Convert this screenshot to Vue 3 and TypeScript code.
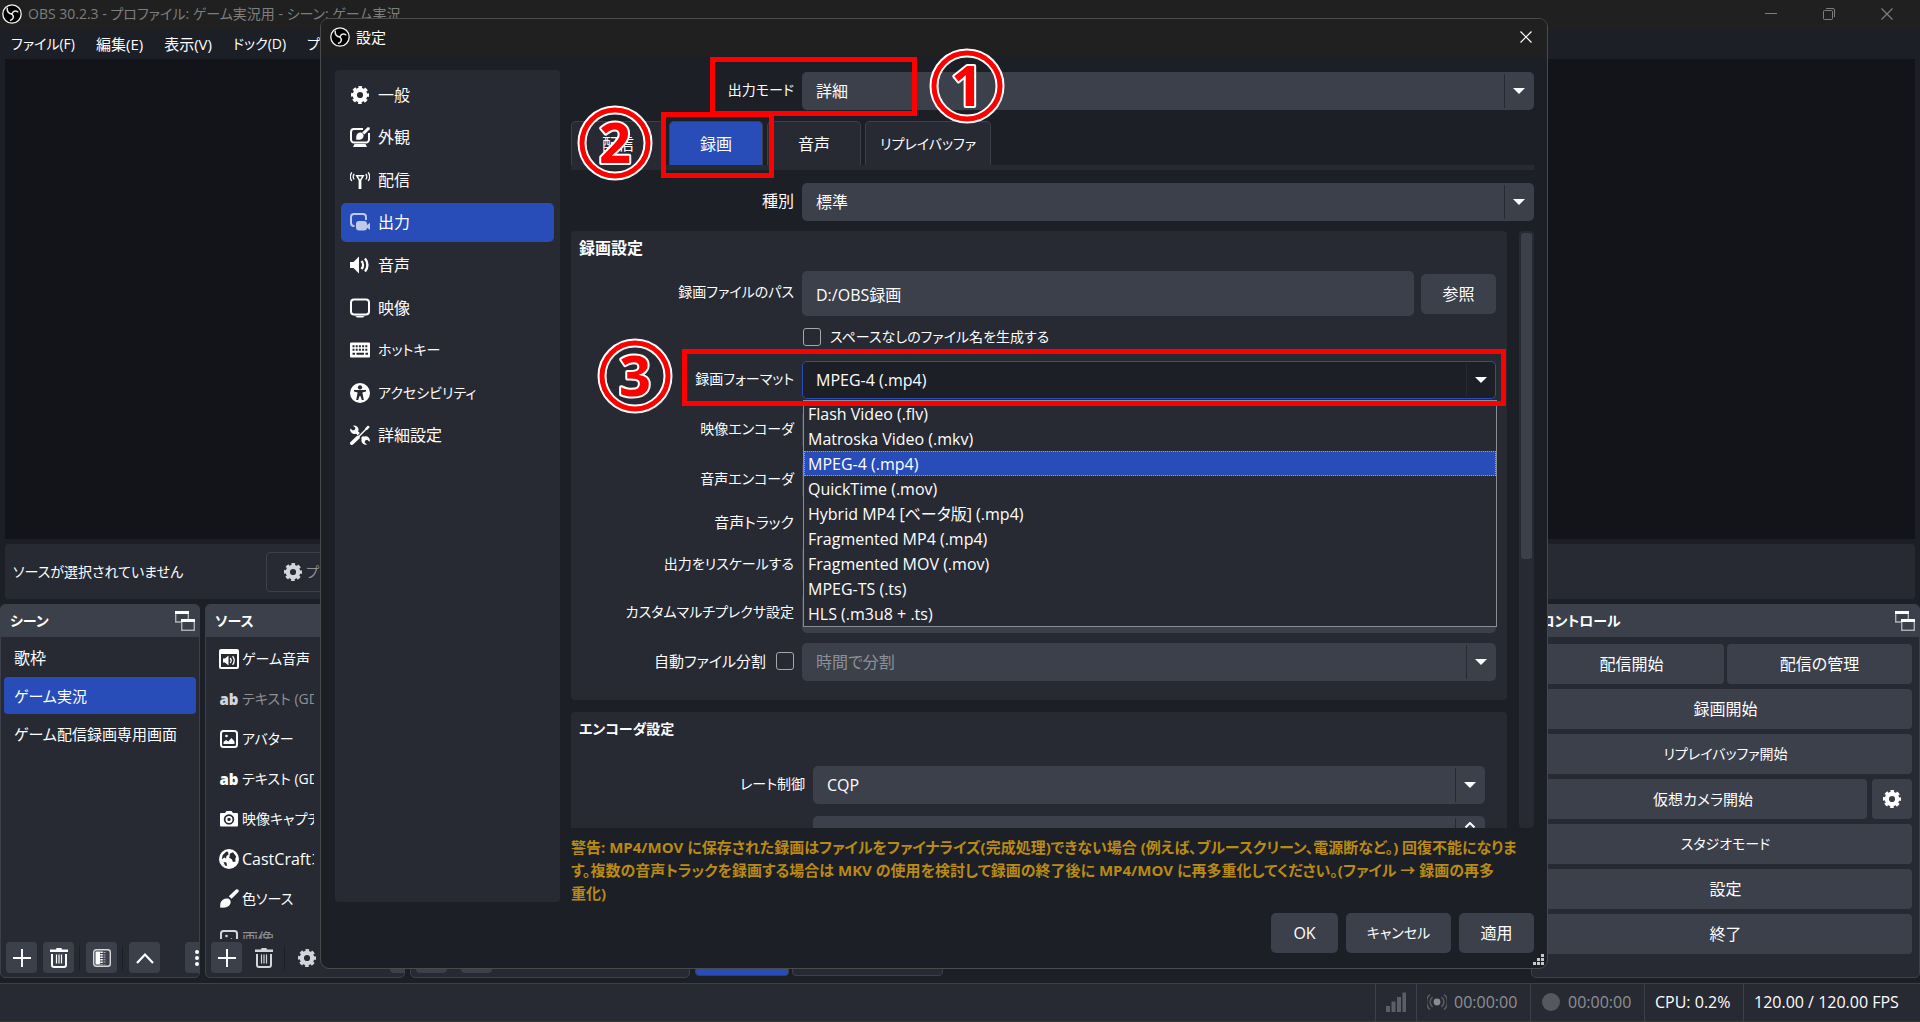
<script setup lang="ts">
import { ref } from 'vue'

interface NavItem { icon: string; label: string }
interface SourceItem { icon: string; label: string; muted?: boolean }

const menus: string[] = ['ファイル(F)', '編集(E)', '表示(V)', 'ドック(D)', 'プロファイル(P)']

const navItems: NavItem[] = [
  { icon: 'gear', label: '一般' },
  { icon: 'appearance', label: '外観' },
  { icon: 'antenna', label: '配信' },
  { icon: 'output', label: '出力' },
  { icon: 'speaker', label: '音声' },
  { icon: 'display', label: '映像' },
  { icon: 'keyboard', label: 'ホットキー' },
  { icon: 'access', label: 'アクセシビリティ' },
  { icon: 'tools', label: '詳細設定' },
]
const activeNav = ref('出力')

const tabs: string[] = ['配信', '録画', '音声', 'リプレイバッファ']
const activeTab = ref('録画')

const formats: string[] = [
  'Flash Video (.flv)',
  'Matroska Video (.mkv)',
  'MPEG-4 (.mp4)',
  'QuickTime (.mov)',
  'Hybrid MP4 [ベータ版] (.mp4)',
  'Fragmented MP4 (.mp4)',
  'Fragmented MOV (.mov)',
  'MPEG-TS (.ts)',
  'HLS (.m3u8 + .ts)',
]
const format = ref('MPEG-4 (.mp4)')

const scenes: string[] = ['歌枠', 'ゲーム実況', 'ゲーム配信録画専用画面']
const activeScene = ref('ゲーム実況')

const sources: SourceItem[] = [
  { icon: 'audio-source', label: 'ゲーム音声' },
  { icon: 'text', label: 'テキスト (GDI+)', muted: true },
  { icon: 'image', label: 'アバター' },
  { icon: 'text', label: 'テキスト (GDI+)' },
  { icon: 'camera', label: '映像キャプチャ' },
  { icon: 'globe', label: 'CastCraftコメント' },
  { icon: 'brush', label: '色ソース' },
  { icon: 'image', label: '画像', muted: true },
]

function sizeOf(label: string): string {
  const kana = (label.match(/[\u3040-\u30ff]/g) ?? []).length
  const kanji = (label.match(/[\u4e00-\u9fff]/g) ?? []).length
  if (kana > kanji) return 'sm'
  return kana > 0 ? 'md' : ''
}
</script>

<template>
  <svg class="defs" aria-hidden="true">
    <symbol id="gear" viewBox="0 0 20 20">
      <circle cx="10" cy="10" r="5.2" fill="none" stroke="currentColor" stroke-width="4.2" />
      <circle cx="10" cy="10" r="7.6" fill="none" stroke="currentColor" stroke-width="2.8" stroke-dasharray="3.5 2.47" stroke-dashoffset="1.75" />
    </symbol>
    <symbol id="logo" viewBox="0 0 20 20">
      <circle cx="10" cy="10" r="9.2" fill="#000" stroke="#f4f4f4" stroke-width="1.3" />
      <g fill="none" stroke="#e6e6e6" stroke-width="1.5" stroke-linecap="round">
        <path d="M5.2 4.2C5 7.400 6.800 9.600 10 10" />
        <path d="M15.800 7.800C13.200 6.400 10.800 7.200 10 10" />
        <path d="M8.600 16.200C11.600 15.400 12.200 12.400 10 10" />
      </g>
    </symbol>
    <symbol id="appearance" viewBox="0 0 20 20">
      <path d="M13 2H4a3 3 0 0 0-3 3v7.500a3 3 0 0 0 3 3h12a3 3 0 0 0 3-3V6" fill="none" stroke="currentColor" stroke-width="2" />
      <path d="M4.500 17h11l1.500 3h-14z" fill="currentColor" />
      <path d="M17.600 0.200l2.200 0.400-0.200 1.600-5.200 5.400-2.200-2z" fill="currentColor" />
      <path d="M11 5.600c2.200 0.600 3.200 2.600 2.200 4.800-1 2-3.400 2.600-7.400 2.200 0.800-0.800 0.200-2.200 0.600-3.800 0.500-2.200 2.400-3.800 4.600-3.200z" fill="currentColor" />
    </symbol>
    <symbol id="antenna" viewBox="0 0 20 20">
      <path d="M5.400 5h9.200l-3.200 5.200V19H8.600v-8.800zM8 6.600l2 3 2-3z" fill="currentColor" fill-rule="evenodd" />
      <path d="M4.200 9.400a4.500 4.500 0 0 1 0-5.400M1.800 11a7.500 7.500 0 0 1 0-8.600M15.800 9.400a4.500 4.500 0 0 0 0-5.400M18.200 11a7.500 7.500 0 0 0 0-8.600" fill="none" stroke="currentColor" stroke-width="1.300" />
    </symbol>
    <symbol id="output" viewBox="0 0 20 20">
      <path d="M4.500 14H4a3 3 0 0 1-3-3V5a3 3 0 0 1 3-3h9a3 3 0 0 1 3 3v3" fill="none" stroke="currentColor" stroke-width="2" />
      <rect x="6" y="9" width="11" height="9.500" rx="3" fill="currentColor" />
      <path d="M16 13.700l4-3v7.300l-4-3z" fill="currentColor" />
    </symbol>
    <symbol id="speaker" viewBox="0 0 20 20">
      <path d="M0 7h3.500L9 1.500v17L3.500 13H0z" fill="currentColor" />
      <path d="M11.500 6a6 6 0 0 1 0 8M15 3.500a10 10 0 0 1 0 13" fill="none" stroke="currentColor" stroke-width="2.400" />
    </symbol>
    <symbol id="display" viewBox="0 0 20 20">
      <rect x="1" y="1.500" width="18" height="15" rx="3" fill="none" stroke="currentColor" stroke-width="2" />
      <path d="M5 17.800h10l-2 1.800H7z" fill="currentColor" />
    </symbol>
    <symbol id="keyboard" viewBox="0 0 20 20">
      <rect x="0" y="2.500" width="20" height="15" rx="1" fill="currentColor" />
      <path d="M2.500 6.200h15M2.500 9.700h15" fill="none" stroke="#272a33" stroke-width="2" stroke-dasharray="2 1.200" />
      <path d="M2.500 13.700h2.500M6.500 13.700h7.500M15.500 13.700h2.500" fill="none" stroke="#272a33" stroke-width="2" />
    </symbol>
    <symbol id="access" viewBox="0 0 20 20">
      <circle cx="10" cy="10" r="10" fill="currentColor" />
      <circle cx="10" cy="4.400" r="2.100" fill="#272a33" />
      <path d="M4 7h12v1.600l-3.600 0.800 1.400 7.600h-2l-1.400-4h-0.800l-1.400 4h-2l1.400-7.600L4 8.600z" fill="#272a33" />
    </symbol>
    <symbol id="tools" viewBox="0 0 20 20">
      <path d="M1.800 18.200l6.200-5.800" stroke="currentColor" stroke-width="3.600" stroke-linecap="round" />
      <path d="M8 12.200l9-9" stroke="currentColor" stroke-width="1.400" />
      <path d="M15 3.400l3-3 1.800 1.600-3 3.200z" fill="currentColor" />
      <path d="M5 5.600l3.800 3.600M12 12l3 2.800" stroke="currentColor" stroke-width="3" />
      <path d="M3 0.800a4.200 4.200 0 1 1-2.600 2.600l2.400 2 2-0.600 0.600-2z" fill="currentColor" />
      <path d="M17 19.400a4.200 4.200 0 1 1 2.600-2.600l-2.400-2-2 0.600-0.600 2z" fill="currentColor" />
    </symbol>
    <symbol id="popout" viewBox="0 0 20 20">
      <path d="M6 11H0.700V1h12.600v7" fill="none" stroke="currentColor" stroke-opacity="0.600" stroke-width="1.400" />
      <rect x="6.700" y="9" width="12.600" height="10.300" fill="none" stroke="currentColor" stroke-opacity="0.600" stroke-width="1.400" />
      <path d="M0 0h14v3H0zM6 8h14v3H6z" fill="currentColor" />
    </symbol>
    <symbol id="audio-source" viewBox="0 0 20 20">
      <path d="M2 0h16a2 2 0 0 1 2 2v16a2 2 0 0 1-2 2H2a2 2 0 0 1-2-2V2a2 2 0 0 1 2-2zM2 5v13h16V5z" fill="currentColor" fill-rule="evenodd" />
      <path d="M4 9.500h2l3.500-3v10l-3.500-3H4z" fill="currentColor" />
      <path d="M11.200 9a4 4 0 0 1 0 5M13.600 7.200a7 7 0 0 1 0 8.600" fill="none" stroke="currentColor" stroke-width="1.300" />
    </symbol>
    <symbol id="image" viewBox="0 0 20 20">
      <rect x="2" y="2" width="16" height="16" rx="2.500" fill="none" stroke="currentColor" stroke-width="2" />
      <circle cx="7.500" cy="7" r="1.300" fill="currentColor" />
      <path d="M4.500 15v-2l2.500-2 2.200 1.600L12.500 9l3 3.600V15z" fill="currentColor" />
    </symbol>
    <symbol id="camera" viewBox="0 0 20 20">
      <path d="M2 4h4l1.500-2h5L14 4h4a1 1 0 0 1 1 1v11.500a1 1 0 0 1-1 1H2a1 1 0 0 1-1-1V5a1 1 0 0 1 1-1zM10 5.200a5.200 5.200 0 1 0 0.010 0z" fill="currentColor" fill-rule="evenodd" />
      <circle cx="10" cy="10.400" r="2.600" fill="none" stroke="currentColor" stroke-width="1.800" />
    </symbol>
    <symbol id="globe" viewBox="0 0 20 20">
      <circle cx="10" cy="10" r="10" fill="currentColor" />
      <path d="M7 2.800L3.600 6.200l-0.800 4L5.500 8.500l1.500 1 0.500-2.500 2-1.500-0.500-2.700zM11 4.500l3-1.200 3.200 4.200-1 2.500 0.400 2.500-2.600 0.500-1.200-2.800-2.600-1.500zM4.500 13l3 0.500 0.500 3.500-2-0.500z" fill="#272a33" />
    </symbol>
    <symbol id="brush" viewBox="0 0 20 20">
      <path d="M17 0.600c1.600-1.200 3.600 0.800 2.400 2.400l-6.800 6.800-2.800-2.600z" fill="currentColor" />
      <path d="M8.600 9.600c3.400 0.600 4 4.400 1.600 7-2 2-4.600 2.200-9.200 2 0.600-1.600-0.200-3.600 1-5.800 1.400-2.400 3.800-3.700 6.600-3.200z" fill="currentColor" />
    </symbol>
    <symbol id="plus" viewBox="0 0 20 20">
      <path d="M10 1v18M1 10h18" fill="none" stroke="currentColor" stroke-width="2" />
    </symbol>
    <symbol id="trash" viewBox="0 0 20 20">
      <path d="M1 1.500h6L7.500 0h5l0.500 1.500h6V4H1z" fill="currentColor" />
      <path d="M3 6v11a2 2 0 0 0 2 2h10a2 2 0 0 0 2-2V6" fill="none" stroke="currentColor" stroke-width="2" />
      <path d="M7.500 6.500v9M10 6.500v9M12.500 6.500v9" fill="none" stroke="currentColor" stroke-width="1.200" />
    </symbol>
    <symbol id="filter" viewBox="0 0 20 20">
      <rect x="1.700" y="1.700" width="16.600" height="16.600" rx="2.500" fill="none" stroke="currentColor" stroke-opacity="0.800" stroke-width="1.400" />
      <path d="M3.500 3.500H8v13H3.500z" fill="currentColor" />
      <path d="M9.500 3.500v13" stroke="currentColor" stroke-width="2.400" stroke-dasharray="1.500 1" />
      <path d="M12.500 4v12.500" stroke="currentColor" stroke-opacity="0.600" stroke-width="2" stroke-dasharray="1 1.400" />
    </symbol>
    <symbol id="up" viewBox="0 0 20 20">
      <path d="M2 15l8-8.500 8 8.500" fill="none" stroke="currentColor" stroke-width="2.200" />
    </symbol>
    <symbol id="dots" viewBox="0 0 20 20">
      <circle cx="10" cy="4" r="2" fill="currentColor" />
      <circle cx="10" cy="10" r="2" fill="currentColor" />
      <circle cx="10" cy="16" r="2" fill="currentColor" />
    </symbol>
    <symbol id="close" viewBox="0 0 12 12">
      <path d="M0.500 0.500l11 11M11.500 0.500l-11 11" fill="none" stroke="currentColor" stroke-width="1.200" />
    </symbol>
  </svg>

  <div class="app">
    <header class="titlebar">
      <svg class="logo"><use href="#logo" /></svg>
      <span class="window-title">OBS 30.2.3 - プロファイル: ゲーム実況用 - シーン: ゲーム実況</span>
      <div class="window-buttons">
        <button type="button" aria-label="最小化"><svg viewBox="0 0 12 12"><path d="M0 5.500h12" stroke="currentColor" /></svg></button>
        <button type="button" aria-label="元に戻す"><svg viewBox="0 0 12 12"><path d="M0.500 3.500a1 1 0 0 1 1-1h7a1 1 0 0 1 1 1v7a1 1 0 0 1-1 1h-7a1 1 0 0 1-1-1zM3 0.500h7a1.500 1.500 0 0 1 1.500 1.500v7" fill="none" stroke="currentColor" /></svg></button>
        <button type="button" aria-label="閉じる"><svg><use href="#close" /></svg></button>
      </div>
    </header>

    <nav class="menubar">
      <button v-for="menu in menus" :key="menu" type="button" :class="sizeOf(menu) || 'md'">{{ menu }}</button>
    </nav>

    <div class="preview"></div>

    <div class="context-bar">
      <span class="context-label sm">ソースが選択されていません</span>
      <button type="button" class="properties sm"><svg class="icon"><use href="#gear" /></svg>プロパティ</button>
    </div>

    <div class="docks">
      <section class="dock">
        <h2 class="dock-title sm">シーン<svg class="icon"><use href="#popout" /></svg></h2>
        <ul class="scene-list">
          <li v-for="scene in scenes" :key="scene">
            <button type="button" :class="[scene.includes('ゲーム') ? 'md' : '', { active: scene === activeScene }]" @click="activeScene = scene">{{ scene }}</button>
          </li>
        </ul>
        <div class="dock-tools">
          <button type="button" aria-label="追加"><svg class="icon"><use href="#plus" /></svg></button>
          <button type="button" aria-label="削除"><svg class="icon"><use href="#trash" /></svg></button>
          <i></i>
          <button type="button" aria-label="フィルタ"><svg class="icon"><use href="#filter" /></svg></button>
          <i></i>
          <button type="button" aria-label="上へ"><svg class="icon"><use href="#up" /></svg></button>
          <button type="button" class="more" aria-label="その他"><svg class="icon"><use href="#dots" /></svg></button>
        </div>
      </section>

      <section class="dock">
        <h2 class="dock-title sm">ソース</h2>
        <ul class="source-list">
          <li v-for="(source, i) in sources" :key="i" :class="{ muted: source.muted }">
            <span v-if="source.icon === 'text'" class="text-glyph">ab</span>
            <svg v-else class="icon"><use :href="'#' + source.icon" /></svg>
            <span :class="['source-name', source.icon === 'globe' ? '' : sizeOf(source.label)]">{{ source.label }}</span>
          </li>
        </ul>
        <div class="dock-tools">
          <button type="button" aria-label="追加"><svg class="icon"><use href="#plus" /></svg></button>
          <button type="button" class="flat" aria-label="削除"><svg class="icon"><use href="#trash" /></svg></button>
          <i></i>
          <button type="button" class="flat" aria-label="プロパティ"><svg class="icon"><use href="#gear" /></svg></button>
          <button type="button" class="more" aria-label="その他"></button>
        </div>
      </section>

      <section class="dock">
        <div class="source-list"></div>
        <div class="dock-tools mixer-tools">
          <button type="button" aria-label="ミキサー設定"></button>
          <button type="button" aria-label="ミキサーメニュー"></button>
        </div>
      </section>

      <div class="dock-tabs"><span class="dock-tab active"></span><span class="dock-tab"></span></div>

      <section class="dock">
        <h2 class="dock-title sm">コントロール<svg class="icon"><use href="#popout" /></svg></h2>
        <div class="controls">
          <div class="controls-row even"><button type="button">配信開始</button><button type="button">配信の管理</button></div>
          <button type="button">録画開始</button>
          <button type="button" class="sm">リプレイバッファ開始</button>
          <div class="controls-row camera">
            <button type="button" class="md">仮想カメラ開始</button>
            <button type="button" aria-label="仮想カメラ設定"><svg class="icon"><use href="#gear" /></svg></button>
          </div>
          <button type="button" class="sm">スタジオモード</button>
          <button type="button">設定</button>
          <button type="button">終了</button>
        </div>
      </section>
    </div>

    <footer class="statusbar">
      <div class="cell signal"><svg viewBox="0 0 20 20" class="icon"><path d="M0 14h4v6H0zM5.500 9.500h4V20h-4zM11 5h4v15h-4zM16.500 0.500h3.500V20h-3.500z" fill="#5b5e66" /></svg></div>
      <div class="cell stream dim">
        <svg viewBox="0 0 20 20" class="icon"><circle cx="10" cy="10" r="3.400" fill="#8a8c92" /><path d="M5.500 15a6.500 6.500 0 0 1 0-10M14.500 15a6.500 6.500 0 0 0 0-10M3 17.500a10 10 0 0 1 0-15M17 17.500a10 10 0 0 0 0-15" fill="none" stroke="#5b5e66" stroke-width="1.500" /></svg>
        00:00:00
      </div>
      <div class="cell record dim"><svg viewBox="0 0 20 20" class="icon"><circle cx="10" cy="10" r="9" fill="#55585f" /></svg>00:00:00</div>
      <div class="cell cpu">CPU: 0.2%</div>
      <div class="cell fps">120.00 / 120.00 FPS</div>
    </footer>

    <div class="dialog" role="dialog" aria-labelledby="dialog-title">
      <header class="dialog-bar">
        <svg class="logo"><use href="#logo" /></svg>
        <span id="dialog-title">設定</span>
        <button type="button" aria-label="閉じる"><svg><use href="#close" /></svg></button>
      </header>

      <div class="dialog-body">
        <nav class="sidebar">
          <ul>
            <li v-for="item in navItems" :key="item.label">
              <button type="button" :class="[sizeOf(item.label), { active: item.label === activeNav }]" @click="activeNav = item.label">
                <svg class="icon"><use :href="'#' + item.icon" /></svg>{{ item.label }}
              </button>
            </li>
          </ul>
        </nav>

        <main class="content">
          <div class="row">
            <label for="mode" class="sm">出力モード</label>
            <div class="combo"><select id="mode"><option>詳細</option></select></div>
          </div>

          <div class="tabs" role="tablist">
            <button v-for="tab in tabs" :key="tab" type="button" role="tab" :aria-selected="tab === activeTab" :class="[sizeOf(tab), { active: tab === activeTab }]" @click="activeTab = tab">{{ tab }}</button>
          </div>

          <div class="row">
            <label for="type">種別</label>
            <div class="combo"><select id="type"><option>標準</option></select></div>
          </div>

          <div class="scroll">
            <div class="groups">
              <section class="group">
                <h3>録画設定</h3>
                <div class="row path">
                  <label for="path" class="sm">録画ファイルのパス</label>
                  <div class="path-field"><input id="path" class="field tall" type="text" value="D:/OBS録画"><button type="button">参照</button></div>
                </div>
                <div class="row short">
                  <span></span>
                  <label class="check sm"><input type="checkbox">スペースなしのファイル名を生成する</label>
                </div>
                <div class="row">
                  <label for="format" class="sm">録画フォーマット</label>
                  <div class="combo focused">
                    <select id="format" v-model="format"><option v-for="f in formats" :key="f">{{ f }}</option></select>
                    <ul class="popup" role="listbox">
                      <li v-for="f in formats" :key="f" role="option" :aria-selected="f === format" :class="{ active: f === format }">{{ f }}</li>
                    </ul>
                  </div>
                </div>
                <div class="row"><label for="venc" class="sm">映像エンコーダ</label><div class="combo"><select id="venc"></select></div></div>
                <div class="row"><label for="aenc" class="sm">音声エンコーダ</label><div class="combo"><select id="aenc"></select></div></div>
                <div class="row short"><span class="label md">音声トラック</span></div>
                <div class="row compact"><label for="rescale" class="sm">出力をリスケールする</label><div class="combo"><select id="rescale"></select></div></div>
                <div class="row compact"><label for="muxer" class="sm">カスタムマルチプレクサ設定</label><input id="muxer" class="field" type="text"></div>
                <div class="row">
                  <label class="check md">自動ファイル分割<input type="checkbox"></label>
                  <div class="combo"><select disabled aria-label="分割方法"><option>時間で分割</option></select></div>
                </div>
              </section>

              <section class="group encoder">
                <h3 class="sm">エンコーダ設定</h3>
                <div class="row"><label for="rate" class="sm">レート制御</label><div class="combo"><select id="rate"><option>CQP</option></select></div></div>
                <div class="row"><label for="cq">CQ レベル</label><div class="combo spin"><input id="cq" type="text"><svg viewBox="0 0 12 6"><path d="M1.500 5.500L6 1l4.500 4.500" fill="none" stroke="currentColor" stroke-width="2" /></svg></div></div>
              </section>
            </div>
            <div class="scrollbar"><div class="thumb"></div></div>
          </div>

          <p class="warning">
            <span>警告: MP4/MOV に保存された録画はファイルをファイナライズ(完成処理)できない場合 (例えば、ブルースクリーン、電源断など。) 回復不能になりま</span>
            <span>す。複数の音声トラックを録画する場合は MKV の使用を検討して録画の終了後に MP4/MOV に再多重化してください。(ファイル → 録画の再多</span>
            <span>重化)</span>
          </p>

          <div class="actions">
            <button type="button" class="ok">OK</button>
            <button type="button" class="cancel sm">キャンセル</button>
            <button type="button" class="apply">適用</button>
          </div>
        </main>
      </div>

      <svg class="grip" viewBox="0 0 11 11"><path d="M8 0h3v3H8zM4 4h3v3H4zM8 4h3v3H8zM0 8h3v3H0zM4 8h3v3H4zM8 8h3v3H8z" fill="#c9c9c9" /></svg>

      <div class="mark mark-mode"></div>
      <div class="mark mark-tab"></div>
      <div class="mark mark-format"></div>
      <svg v-for="n in 3" :key="n" :class="['badge', 'badge-' + n]" viewBox="0 0 76 76">
        <circle cx="38" cy="38" r="33" fill="none" stroke="#fff" stroke-width="9" />
        <circle cx="38" cy="38" r="33" fill="none" stroke="#f00" stroke-width="5" />
        <text x="38" y="58" text-anchor="middle">{{ n }}</text>
      </svg>
    </div>
  </div>
</template>

<style>
html, body { height: 100%; background: #1d1f26; }
#app { height: 100%; }
</style>

<style scoped>
* { box-sizing: border-box; }
.defs { position: absolute; width: 0; height: 0; }
.app {
  position: relative;
  display: flex;
  flex-direction: column;
  height: 100vh;
  min-height: 1000px;
  overflow: hidden;
  background: #1d1f26;
  color: #fefefe;
  font: 16px/24px "Open Sans", "Noto Sans CJK JP", sans-serif;
  font-feature-settings: "palt";
}
button, input, select { font: inherit; font-feature-settings: inherit; color: inherit; border: 0; margin: 0; padding: 0; background: none; }
ul { list-style: none; margin: 0; padding: 0; }
h2, h3, p { margin: 0; font-size: 16px; }
.app .sm { font-size: 14px; }
.app .md { font-size: 15px; }
.icon { width: 20px; height: 20px; flex: none; }
.logo { width: 20px; height: 20px; flex: none; }

.titlebar { display: flex; align-items: center; flex: none; height: 29px; padding: 0 4px 1px 2px; background: #202020; color: #7e7e7e; font-size: 14px; }
.window-title { margin-left: 6px; white-space: nowrap; }
.window-buttons { display: flex; margin-left: auto; }
.window-buttons button { display: grid; place-items: center; width: 58px; height: 28px; }
.window-buttons svg { width: 12px; height: 12px; }

.menubar { display: flex; flex: none; gap: 21px; height: 30px; padding: 0 0 1px 11px; align-items: center; }
.menubar button { white-space: nowrap; }
.preview { flex: 1; margin: 0 5px; background: #131419; }

.context-bar { display: flex; align-items: center; flex: none; height: 55px; margin: 5px; padding-left: 8px; border-radius: 4px; background: #272a33; }
.context-label { width: 253px; white-space: nowrap; }
.properties { display: flex; align-items: center; gap: 3px; width: 160px; height: 40px; padding-left: 16px; border: 1px solid #3c404b; border-radius: 4px; color: #8e9096; }
.properties .icon { color: #d3d5dc; }

.docks { display: grid; grid-template-columns: 200px 200px 280px 1fr 389px; gap: 5px; flex: none; height: 374px; }
.dock { display: flex; flex-direction: column; min-width: 0; overflow: hidden; border: 1px solid #3c404b; border-radius: 5px; background: #272a33; }
.dock-title { display: flex; align-items: center; justify-content: space-between; flex: none; height: 32px; padding: 0 4px 0 9px; background: #3c404b; font-weight: 700; }
.scene-list { display: flex; flex-direction: column; flex: 1; gap: 1px; padding: 2px 3px; }
.scene-list button { width: 100%; height: 37px; padding-left: 10px; border-radius: 4px; text-align: left; white-space: nowrap; }
.scene-list .active { background: #284cb8; }
.source-list { flex: 1; min-height: 0; overflow: hidden; padding: 2px 0 0 13px; }
.source-list li { display: flex; align-items: center; gap: 3px; height: 40px; }
.source-name { width: 72px; overflow: hidden; white-space: nowrap; }
.muted { color: #8e9096; }
.muted .icon, .muted .text-glyph { color: #d3d5dc; }
.text-glyph { width: 20px; text-align: center; font-size: 15px; font-weight: 800; }
.dock-tools { display: flex; align-items: center; flex: none; gap: 6px; height: 38px; padding: 0 0 1px 5px; }
.dock-tools button { display: grid; place-items: center; flex: none; width: 31px; height: 31px; border-radius: 4px; background: #3c404b; }
.dock-tools i { width: 1px; height: 24px; margin-left: -1px; background: #1d1f26; }
.dock-tools .flat { background: none; color: #d3d5dc; }
.dock-tools .more { margin-left: auto; margin-right: -17px; }
.dock-tools .more .icon { margin-left: -8px; }
.mixer-tools { gap: 14px; }
.dock-tabs { display: flex; align-items: flex-end; gap: 3px; padding-bottom: 2px; }
.dock-tab { width: 151px; height: 36px; border: 1px solid #3c404b; border-radius: 4px; background: #272a33; }
.dock-tab.active { width: 94px; background: #284cb8; }

.controls { display: flex; flex-direction: column; gap: 5px; padding: 7px; }
.controls button { height: 40px; border-radius: 4px; background: #3c404b; }
.controls-row { display: grid; }
.controls-row.even { grid-template-columns: 1fr 1fr; gap: 3px; }
.controls-row.camera { grid-template-columns: 1fr 40px; gap: 5px; }
.controls-row button { display: grid; place-items: center; }

.statusbar { display: flex; justify-content: flex-end; flex: none; height: 39px; margin-top: 5px; border-top: 1px solid #3c404b; border-bottom: 1px solid #3b3b38; background: #272a33; }
.cell { display: flex; align-items: center; border-left: 1px solid #3c404b; padding: 0 0 1px 10px; white-space: nowrap; }
.dim { color: #8e9096; }
.signal { width: 41px; }
.stream { width: 114px; gap: 7px; }
.record { width: 114px; gap: 7px; }
.cpu { width: 99px; }
.fps { width: 177px; }

.dialog { position: absolute; inset: 18px 372px 53px 320px; display: flex; flex-direction: column; border: 1px solid #4a4b4d; border-radius: 9px; background: #1d1f26; }
.dialog-bar { display: flex; align-items: center; flex: none; height: 37px; padding: 0 15px 1px 9px; border-radius: 8px 8px 0 0; background: #202020; font-size: 15px; }
.dialog-bar span { margin-left: 6px; }
.dialog-bar button { display: grid; margin-left: auto; }
.dialog-bar button svg { width: 12px; height: 12px; }
.dialog-body { display: flex; flex: 1; gap: 11px; min-height: 0; padding: 14px 13px 15px 14px; }

.sidebar { width: 225px; flex: none; margin-bottom: 51px; padding: 5px 6px; border-radius: 4px; background: #272a33; }
.sidebar ul { display: flex; flex-direction: column; gap: 3px; height: 380px; }
.sidebar li { display: flex; flex: 1; }
.sidebar button { display: flex; align-items: center; gap: 8px; width: 100%; padding-left: 9px; border-radius: 5px; }
.sidebar .active { background: #284cb8; }
.sidebar .active .icon { color: #bfc9ea; }

.content { display: flex; flex: 1; flex-direction: column; min-width: 0; padding-top: 2px; }
.row { display: grid; grid-template-columns: 223px minmax(0, 1fr); column-gap: 8px; align-items: center; flex: none; height: 38px; }
.row > label:first-child, .label { justify-self: end; white-space: nowrap; padding-bottom: 3px; }
.combo { position: relative; height: 38px; border-radius: 5px; background: #3c404b; }
.combo::before { content: ""; position: absolute; top: 2px; bottom: 2px; right: 29px; width: 1px; background: #272a33; }
.combo::after { content: ""; position: absolute; top: 16px; right: 9px; border: 6px solid transparent; border-top-color: #fefefe; border-bottom: 0; }
.combo select, .combo input { width: 100%; height: 38px; padding-left: 14px; appearance: none; opacity: 1; outline: 0; }
.combo select:disabled { color: #8e9096; }
.combo.focused { background: #1d1f26; box-shadow: inset 0 0 0 1px #284cb8; }
.combo.spin::after { content: none; }
.spin svg { position: absolute; top: 6px; right: 9px; width: 12px; height: 6px; }

.tabs { display: flex; flex: none; gap: 4px; height: 49px; margin: 11px 0 13px; border-bottom: 5px solid #272a33; }
.tabs button { min-width: 94px; padding: 0 14px; border: 1px solid #3c404b; border-bottom: 0; border-radius: 5px 5px 0 0; background: #272a33; white-space: nowrap; }
.tabs .active { background: #284cb8; }

.scroll { display: flex; flex: 1; gap: 12px; min-height: 0; margin-top: 10px; overflow: hidden; }
.groups { flex: 1; min-width: 0; overflow: hidden; }
.group { height: 469px; margin-bottom: 12px; padding: 5px 11px 0 0; border-radius: 4px; background: #272a33; }
.group h3 { height: 32px; padding-left: 8px; font-weight: 700; }
.group .row { height: 50px; }
.group .row.path { height: 51px; }
.group .row.short { height: 36px; }
.group .row.compact { height: 48px; }
.group.encoder { padding-right: 22px; }
.group.encoder h3 { height: 43px; }
.group.encoder .row { grid-template-columns: 234px minmax(0, 1fr); }
.path-field { display: grid; grid-template-columns: minmax(0, 1fr) 75px; gap: 7px; align-items: center; }
.field { width: 100%; height: 40px; padding-left: 14px; border-radius: 5px; background: #3c404b; }
.field.tall { height: 45px; }
.path-field button { height: 40px; border-radius: 5px; background: #3c404b; }
.check { display: flex; align-items: center; gap: 9px; white-space: nowrap; }
.check input { appearance: none; width: 18px; height: 18px; margin-left: 1px; border: 1px solid #a5a7ab; border-radius: 3px; }
.popup { position: absolute; z-index: 2; top: 39px; left: 1px; right: -1px; border: 1px solid #8b8d93; background: #272a33; }
.popup li { height: 25px; padding-left: 3px; border: 1px solid transparent; line-height: 25px; white-space: nowrap; }
.popup .active { border: 1px dotted #c2a44c; background: #284cb8; }
.scrollbar { width: 15px; flex: none; padding: 2px; border-radius: 4px; background: #272a33; }
.thumb { height: 55%; border-radius: 3px; background: #3c404b; }

.warning { flex: none; height: 77px; margin-top: 8px; color: #b88a16; font-size: 15px; font-weight: 700; line-height: 23px; white-space: nowrap; }
.warning span { display: block; }
.actions { display: flex; flex: none; justify-content: flex-end; gap: 8px; }
.actions button { height: 40px; border-radius: 5px; background: #3c404b; }
.ok { width: 67px; }
.cancel { width: 105px; }
.apply { width: 75px; }
.grip { position: absolute; right: 3px; bottom: 3px; width: 11px; height: 11px; }

.mark { position: absolute; z-index: 3; border: 5px solid #f00; }
.mark-mode { top: 38px; left: 389px; width: 207px; height: 59px; }
.mark-tab { top: 93px; left: 340px; width: 113px; height: 66px; }
.mark-format { top: 330px; left: 361px; right: 41px; height: 57px; }
.badge { position: absolute; z-index: 4; width: 76px; height: 76px; }
.badge-1 { top: 29px; left: 608px; }
.badge-2 { top: 86px; left: 256px; }
.badge-3 { top: 319px; left: 276px; }
.badge text { fill: #f00; stroke: #fff; stroke-width: 4px; stroke-linejoin: round; paint-order: stroke; font: 700 56px "Noto Sans", sans-serif; }
</style>
